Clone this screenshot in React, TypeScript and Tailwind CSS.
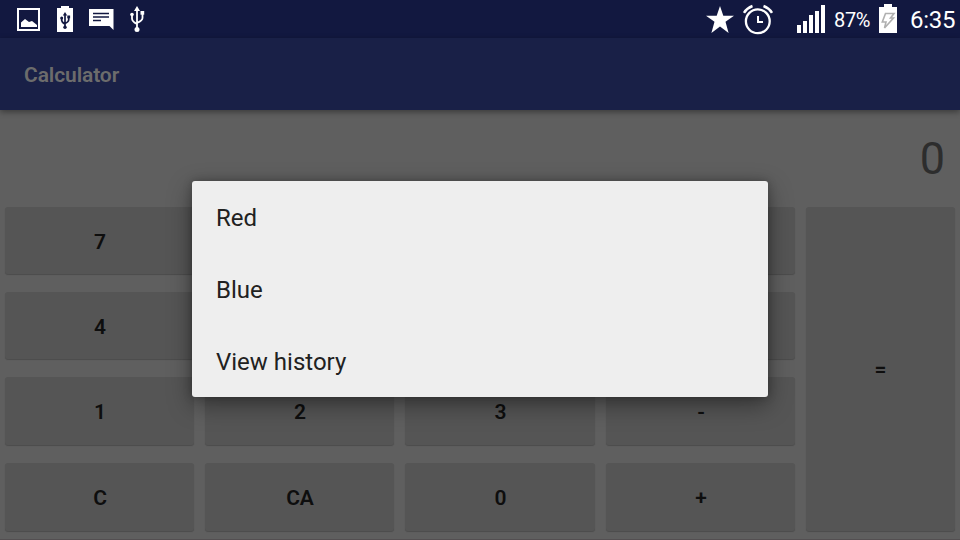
import React from "react";

const keys = ["7", "8", "9", "/", "4", "5", "6", "*", "1", "2", "3", "-", "C", "CA", "0", "+"];
const menuItems = ["Red", "Blue", "View history"];
const keyStyle =
  "flex items-center justify-center rounded-[3px] bg-[#555555] text-[21px] font-semibold text-[#0e0e0e] shadow-[0_1px_1px_rgba(0,0,0,0.2)]";

function StatusBar() {
  return (
    <header className="h-[38px] shrink-0 bg-[#121840] text-white">
      <svg width="960" height="38" viewBox="0 0 960 38" fill="#fff">
        <path fillRule="evenodd" d="M17 8H40V31H17ZM19 10V29H38V10Z" />
        <path d="M21 27V22.500L25 19L29 22L32 21L37 25V27Z" />
        <path d="M61 6H69V8H73V32H57V8H61Z" />
        <path d="M65 14V27M61.700 18V20.500Q62 22.500 65 24.300M68.700 17V20Q68.500 22 65 23.500" fill="none" stroke="#121840" strokeWidth="1.700" />
        <g fill="#121840">
          <path d="M62.800 15.500L65 12L67.200 15.500Z" />
          <circle cx="65" cy="27.200" r="1.700" />
          <circle cx="61.700" cy="18" r="1.500" />
          <rect x="67.300" y="15.500" width="2.800" height="2.800" />
        </g>
        <path d="M89 9H113.500V30L109.500 26H89Z" />
        <path d="M93 13.500H109M93 17H109M93 20.500H101" stroke="#121840" strokeWidth="1.300" />
        <path d="M137 9V29M132 14V18.500Q132 21.500 137 24M142.500 13V18Q142.500 20.500 137 23" fill="none" stroke="#fff" strokeWidth="1.800" />
        <path d="M134 11L137 6L140 11Z" />
        <circle cx="137" cy="29.500" r="2.500" />
        <circle cx="132" cy="14.500" r="1.800" />
        <rect x="140.500" y="11" width="3.700" height="3.700" />
        <path d="M720 6L723.300 15.700H734L725.500 21.800L728.600 33L720 26.500L711.400 33L714.500 21.800L706 15.700H716.700Z" />
        <circle cx="757.800" cy="21.300" r="11.900" fill="none" stroke="#fff" strokeWidth="2.300" />
        <path d="M758 16V22H763" fill="none" stroke="#fff" strokeWidth="2" />
        <path d="M744 12.800Q747 8 752.500 6M772 12.800Q769 8 763.500 6" fill="none" stroke="#fff" strokeWidth="2.500" />
        <path d="M797 25h4v8h-4zM803 21h4v12h-4zM809 15h4v18h-4zM815 11h4v22h-4zM821 5h4v28h-4z" />
        <path d="M884 4H892V7H897V33H879V7H884Z" />
        <path d="M885.500 13.500H894L890.500 18H893.500L884.500 28L886 22H882.300Z" fill="none" stroke="#b0b0b0" strokeWidth="1.600" />
        <text x="834" y="27" fontSize="20" textLength="36.500">87%</text>
        <text x="910" y="28" fontSize="24" textLength="45.500">6:35</text>
      </svg>
    </header>
  );
}

export default function App() {
  return (
    <div className="relative flex h-[540px] w-[960px] flex-col overflow-hidden bg-[#5f5f5f] font-[Roboto,sans-serif]">
      <StatusBar />
      <div className="flex h-[72px] shrink-0 items-center bg-[#192047] pl-6 text-[21px] text-[#6c6c6c] shadow-[0_2px_6px_rgba(0,0,0,0.4)]">
        <h1 className="w-[95px] pt-[4px] font-semibold tracking-[-0.1px]">Calculator</h1>
      </div>
      <div className="flex h-[97px] shrink-0 items-center justify-end pr-[15px] text-[45px] text-[#2d2d2d]">
        <span>0</span>
      </div>
      <main className="flex h-[324px] shrink-0 gap-[11px] px-[5px]">
        <div className="grid w-[790px] grid-cols-[189px_189px_190px_189px] grid-rows-[67px_67px_68px_68px] gap-x-[11px] gap-y-[18px]">
          {keys.map((key) => (
            <button key={key} className={`${keyStyle} pt-[4px] pl-px`}>{key}</button>
          ))}
        </div>
        <button className={`${keyStyle} w-[149px] pt-[2px]`}>=</button>
      </main>
      <div className="mt-auto h-px shrink-0 bg-[#534f51]" />
      <div role="menu" className="absolute left-[192px] top-[181px] flex h-[216px] w-[576px] flex-col rounded-[3px] bg-[#eeeeee] text-2xl text-[#212121] shadow-[0_8px_24px_rgba(0,0,0,0.4),0_0_8px_rgba(0,0,0,0.25)]">
        {menuItems.map((item) => (
          <div key={item} role="menuitem" className="flex h-[72px] items-center px-6 pt-[2px]">{item}</div>
        ))}
      </div>
    </div>
  );
}
